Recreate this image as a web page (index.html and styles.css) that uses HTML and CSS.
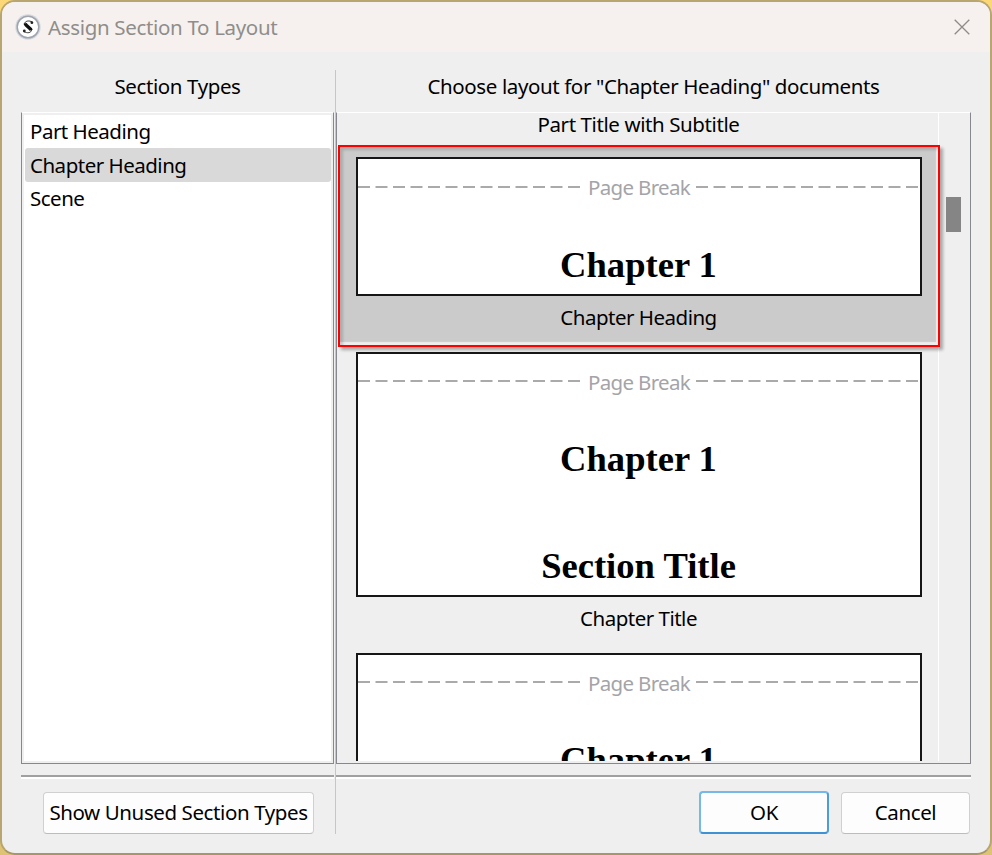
FILE: index.html
```html
<!DOCTYPE html>
<html lang="en">
<head>
<meta charset="utf-8">
<title>Assign Section To Layout</title>
<link rel="stylesheet" href="styles.css">
</head>
<body>
<main class="window">
  <header class="titlebar">
    <svg class="logo" width="26" height="26" viewBox="0 0 26 26">
      <circle cx="13" cy="13" r="12.7" fill="#d3d7df"/>
      <circle cx="13" cy="13" r="10.8" fill="#fff" stroke="#a0a4ad" stroke-width="1.5"/>
      <path d="M17 8C14.5 6.2 9.5 6.8 9.7 10C10.2 13 16.6 12.6 16.5 15.9C16.4 19 12 19.5 9.1 17.6" fill="none" stroke="#333" stroke-width="1"/>
      <path d="M10.1 9.4C10.8 12.3 15.3 13.3 16.1 16.3" fill="none" stroke="#111" stroke-width="3.4"/>
      <circle cx="16.9" cy="8.7" r="1.4" fill="#222"/>
      <circle cx="9.3" cy="17" r="1.4" fill="#222"/>
    </svg>
    <h1 class="title">Assign Section To Layout</h1>
    <svg class="close" width="16" height="16" viewBox="0 0 16 16"><path d="M.7 .7 15.3 15.3M15.3 .7 .7 15.3" stroke="#8d8a88" stroke-width="1.3" fill="none"/></svg>
  </header>
  <div class="columns">
    <section class="types">
      <h2 class="heading">Section Types</h2>
      <ul class="type-list">
        <li class="type">Part Heading</li>
        <li class="type selected">Chapter Heading</li>
        <li class="type">Scene</li>
      </ul>
      <div class="rule"></div>
      <footer class="actions left"><button class="button wide">Show Unused Section Types</button></footer>
    </section>
    <div class="divider"></div>
    <section class="layouts">
      <h2 class="heading">Choose layout for "Chapter Heading" documents</h2>
      <div class="panel">
        <div class="cards">
          <div class="caption first">Part Title with Subtitle</div>
          <div class="choice active">
            <div class="card short">
              <div class="break"><svg class="dash" width="222" height="2"><path d="M0 1H222"/></svg><span class="break-label">Page Break</span><svg class="dash" width="222" height="2"><path d="M0 1H222"/></svg></div>
              <div class="chapter">Chapter 1</div>
            </div>
            <div class="caption">Chapter Heading</div>
          </div>
          <div class="choice">
            <div class="card tall">
              <div class="break"><svg class="dash" width="222" height="2"><path d="M0 1H222"/></svg><span class="break-label">Page Break</span><svg class="dash" width="222" height="2"><path d="M0 1H222"/></svg></div>
              <div class="chapter">Chapter 1</div>
              <div class="chapter section">Section Title</div>
            </div>
            <div class="caption">Chapter Title</div>
          </div>
          <div class="choice third">
            <div class="card tall">
              <div class="break"><svg class="dash" width="222" height="2"><path d="M0 1H222"/></svg><span class="break-label">Page Break</span><svg class="dash" width="222" height="2"><path d="M0 1H222"/></svg></div>
              <div class="chapter">Chapter 1</div>
            </div>
          </div>
        </div>
        <div class="scrollbar"><div class="thumb"></div></div>
      </div>
      <div class="rule"></div>
      <footer class="actions right"><button class="button ok">OK</button><button class="button">Cancel</button></footer>
    </section>
  </div>
</main>
</body>
</html>
```

FILE: styles.css
```css
* { box-sizing: border-box; margin: 0; padding: 0; }
body { width: 992px; height: 855px; overflow: hidden; background: linear-gradient(#fbd776, #dfc374); font: 20.5px/28px "Noto Sans", sans-serif; letter-spacing: -0.5px; color: #000; }
.window { width: 992px; height: 855px; border: 2px solid #b8a56f; border-bottom-color: #a6966a; border-radius: 15px; background: #efefef; overflow: hidden; }
.titlebar { height: 50px; display: flex; align-items: center; padding: 0 20px 0 13px; background: #f6f1ee; color: #8f8d8b; }
.logo { margin-right: 7px; }
.title { font-size: 20.5px; font-weight: 400; letter-spacing: -0.33px; flex: 1; }
.close { margin-top: -1px; }
.columns { display: flex; padding-left: 19px; height: 801px; }
.types { width: 313px; margin-right: 1px; }
.layouts { width: 635px; }
.divider { width: 1px; height: 764px; margin-top: 18px; background: #c6c6c6; }
.heading { height: 60px; padding-top: 20px; font-size: 20.5px; font-weight: 400; letter-spacing: -0.39px; text-align: center; }
.type-list { list-style: none; height: 652px; border: 1px solid #87878f; border-top-color: #fff; background: #fff; box-shadow: inset 0 0 0 2px #efefef; padding: 2px; }
.type { height: 34px; line-height: 34px; padding-left: 5px; margin-left: 1px; }
.type:first-child { height: 33px; line-height: 32px; }
.type.selected { background: #d9d9d9; border-radius: 3px; }
.type:last-child { line-height: 32px; }
.rule { height: 4px; margin-top: 11px; border-top: 2px solid #a0a0a0; border-bottom: 2px solid #fff; }
.actions { display: flex; margin-top: 13px; height: 42px; }
.left { padding-left: 22px; }
.right { justify-content: flex-end; gap: 12px; padding-right: 1px; }
.button { font: inherit; letter-spacing: -0.4px; width: 129px; height: 42px; padding-bottom: 2px; border: 1px solid #d0d0d0; border-bottom-color: #bcbcbc; border-radius: 4px; background: #fdfdfd; color: #000; white-space: nowrap; }
.wide { width: 271px; }
.ok { width: 130px; border: 2px solid; border-color: #76b8e8 #4b9ddb #3e92d4 #76b8e8; margin-top: -1px; height: 43px; padding-bottom: 1px; }
.panel { display: flex; height: 652px; border: 1px solid #87878f; border-top-color: #fff; padding-bottom: 2px; }
.cards { width: 602px; flex: none; overflow-x: visible; overflow-y: clip; border-right: 1px solid #fff; }
.caption { width: 565px; text-align: center; height: 28px; }
.first { width: 603px; height: 32px; line-height: 22px; letter-spacing: -0.4px; }
.choice { padding: 5px 0 0 19px; }
.active { position: relative; width: 602px; margin-left: 1px; height: 202px; padding: 10px 0 0 16px; border: 2px solid #f00; background: #cbcbcb; box-shadow: 3px 3px 3px rgba(0,0,0,.3), inset 3px 3px 3px rgba(0,0,0,.16), inset -2px -3px 1px #eee; }
.card { width: 566px; border: 2px solid #161616; background: #fff; margin-bottom: 7px; overflow: hidden; }
.short { height: 139px; }
.tall { height: 245px; }
.third { margin-top: 16px; }
.break { display: flex; align-items: center; justify-content: space-between; height: 55px; color: #a4a4a8; letter-spacing: -0.68px; padding-right: 2px; }
.break-label { position: relative; left: 1px; }
.dash { stroke: #aaa; stroke-width: 2; stroke-dasharray: 12 5.5; }
.tall .dash { margin-top: -2px; }
.chapter { font: bold 36.6px/42px "Liberation Serif", serif; letter-spacing: 0; text-align: center; margin-top: 30px; padding-right: 1px; }
.tall .chapter { margin-top: 29px; }
.tall .section { margin-top: 65px; }
.thumb { width: 15px; height: 35px; background: #858585; margin: 84px 0 0 7px; }
```
